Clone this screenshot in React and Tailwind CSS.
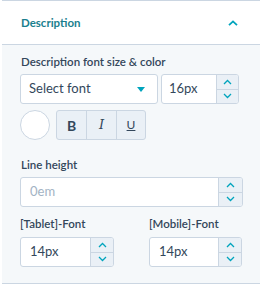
import React from "react";

const font = { fontFamily: "Lato, 'Noto Sans', sans-serif" };

function Up() {
  return (
    <svg width="9" height="6" viewBox="0 0 9 6" fill="none">
      <path d="M1 5L4.5 1.5L8 5" stroke="#00a4bd" strokeWidth="1.3" />
    </svg>
  );
}
function Down() {
  return (
    <svg width="9" height="6" viewBox="0 0 9 6" fill="none">
      <path d="M1 1L4.5 4.5L8 1" stroke="#00a4bd" strokeWidth="1.3" />
    </svg>
  );
}

function Spin({ w }) {
  return (
    <div className={`flex flex-col border-l border-[#cbd6e2] bg-[#eaf0f6] ${w}`}>
      <div className="flex-1 flex items-center justify-center border-b border-[#cbd6e2]">
        <Up />
      </div>
      <div className="flex-1 flex items-center justify-center">
        <Down />
      </div>
    </div>
  );
}

function NumInput({ value, width, spin, pl, placeholder }) {
  return (
    <div className={`flex h-[30px] ${width} rounded-[3px] border border-[#cbd6e2] bg-white overflow-hidden`}>
      <div className={`flex-1 flex items-center ${pl} text-[13px] ${placeholder ? "text-[#a3b3c4]" : "text-[#33475b]"}`}>
        {value}
      </div>
      <Spin w={spin} />
    </div>
  );
}

export default function App() {
  return (
    <div className="w-[270px] h-[287px] bg-white" style={font}>
      <div className="ml-[2px] w-[258px]">
        <div className="h-[45px] border-t border-b border-[#cbd6e2] bg-white flex items-center justify-between pl-[19px] pr-[22px]">
          <span className="text-[11.5px] font-bold text-[#1a7f8e]">Description</span>
          <svg width="10" height="6" viewBox="0 0 10 6" fill="none">
            <path d="M1 5.2L5 1.4L9 5.2" stroke="#00a4bd" strokeWidth="1.8" />
          </svg>
        </div>
        <div className="h-[239px] bg-[#f5f8fa] border-b border-[#cbd6e2] pl-[18px] pt-[9px]">
          <div className="text-[11.5px] font-semibold text-[#33475b] leading-[16px] pl-[1px]">
            Description font size &amp; color
          </div>
          <div className="flex mt-[4px] gap-[3px]">
            <div className="h-[30px] w-[138px] rounded-[3px] border border-[#cbd6e2] bg-white flex items-center justify-between pl-[8px] pr-[12px]">
              <span className="text-[13px] text-[#33475b]">Select font</span>
              <svg width="8" height="5" viewBox="0 0 8 5">
                <path d="M0 0H8L4 5Z" fill="#00a4bd" />
              </svg>
            </div>
            <NumInput value="16px" width="w-[78px]" spin="w-[22px]" pl="pl-[7px]" />
          </div>
          <div className="flex mt-[6px] gap-[6px] items-center">
            <div className="w-[30px] h-[30px] rounded-full bg-white border border-[#cbd6e2]" />
            <div className="flex h-[30px] rounded-[3px] border border-[#cbd6e2] bg-[#eaf0f6] overflow-hidden">
              <div className="w-[29px] flex items-center justify-center text-[14px] font-bold text-[#33475b]">B</div>
              <div className="w-[30px] flex items-center justify-center text-[13px] italic text-[#33475b] border-l border-[#cbd6e2]" style={{ fontFamily: "'DejaVu Serif', serif" }}>I</div>
              <div className="w-[29px] flex items-center justify-center text-[12px] underline text-[#33475b] border-l border-[#cbd6e2]">U</div>
            </div>
          </div>
          <div className="mt-[17px] text-[11.5px] font-semibold text-[#33475b] leading-[16px] pl-[1px]">Line height</div>
          <div className="mt-[4px]">
            <NumInput value="0em" width="w-[223px]" spin="w-[24px]" pl="pl-[9px]" placeholder />
          </div>
          <div className="flex mt-[9px] gap-[35px]">
            <div>
              <div className="text-[11.5px] font-semibold text-[#33475b] leading-[16px]">[Tablet]-Font</div>
              <div className="mt-[5px]">
                <NumInput value="14px" width="w-[94px]" spin="w-[23px]" pl="pl-[9px]" />
              </div>
            </div>
            <div>
              <div className="text-[11.5px] font-semibold text-[#33475b] leading-[16px]">[Mobile]-Font</div>
              <div className="mt-[5px]">
                <NumInput value="14px" width="w-[93px]" spin="w-[23px]" pl="pl-[9px]" />
              </div>
            </div>
          </div>
        </div>
      </div>
    </div>
  );
}
